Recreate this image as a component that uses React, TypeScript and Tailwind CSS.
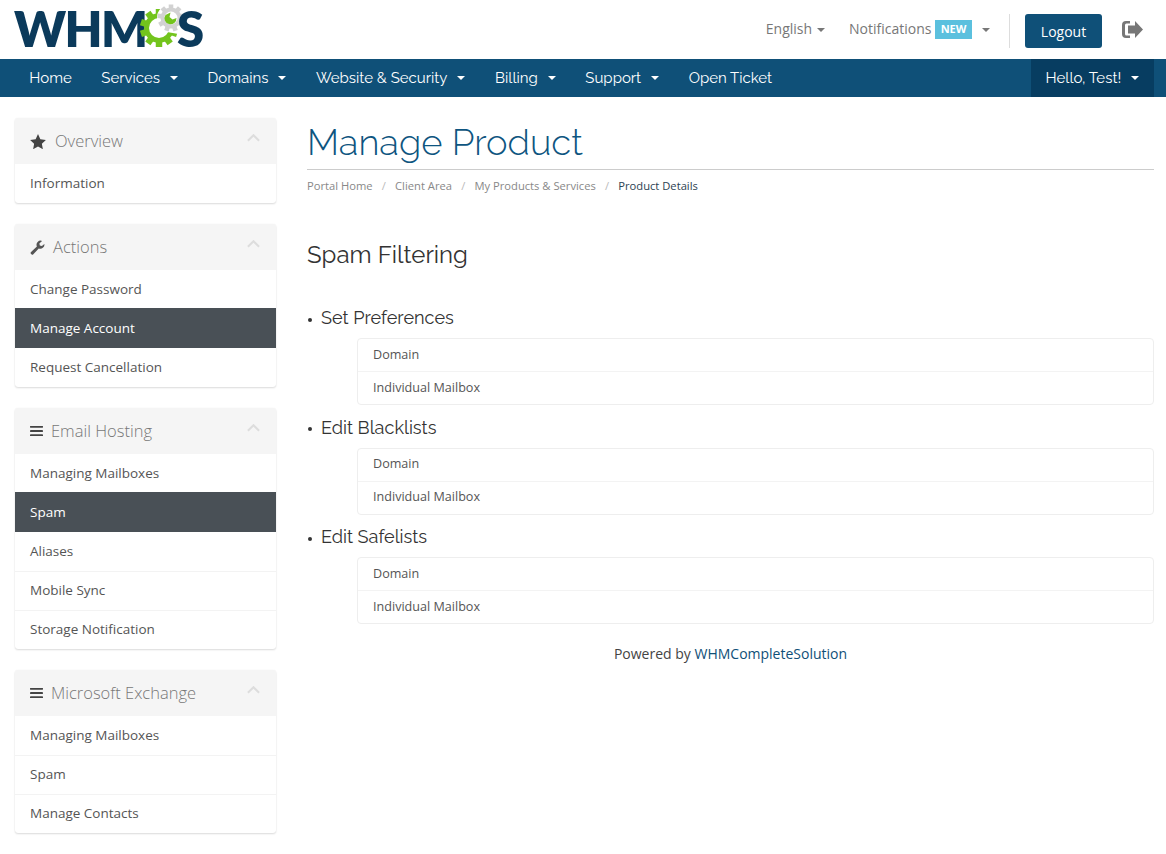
import React from "react";

const OS = "font-['Open_Sans',sans-serif]";

function Caret({ className = "" }: { className?: string }) {
  return <span className={`inline-block w-0 h-0 border-x-[4px] border-x-transparent border-t-[4px] border-t-current ${className}`} />;
}

function Gear({ cx, cy, r, teeth, fill, hole }: { cx: number; cy: number; r: number; teeth: number; fill: string; hole: number }) {
  const items = [];
  for (let i = 0; i < teeth; i++) {
    const a = (360 / teeth) * i;
    items.push(<rect key={i} x={cx - r * 0.17} y={cy - r} width={r * 0.34} height={r * 0.4} fill={fill} transform={`rotate(${a} ${cx} ${cy})`} />);
  }
  return (
    <g>
      {items}
      <circle cx={cx} cy={cy} r={r * 0.78} fill={fill} />
      <circle cx={cx} cy={cy} r={hole} fill="#fff" />
    </g>
  );
}

function Logo() {
  return (
    <div className="relative w-[190px] h-[50px] mt-[3px] font-['Lato',sans-serif] font-extrabold text-[#0b3a5b] text-[49px] leading-[50px]">
      <span className="absolute left-[-1px] top-0 tracking-[-1.6px]">WHM</span>
      {/* gear coordinates: svg origin = page (130,0) */}
      <svg viewBox="0 0 60 54" className="absolute left-[115px] top-[-3px] w-[60px] h-[54px]">
        <Gear cx={29} cy={28} r={19} teeth={10} fill="#73c41d" hole={10} />
        <path d="M31 18 L60 14 L60 36 L37 32 Z" fill="#fff" />
        <circle cx={41} cy={18} r={14} fill="#fff" />
        <Gear cx={41} cy={18} r={13.5} teeth={9} fill="#d2d2d2" hole={6.5} />
        <path d="M35.500 15a6 6 0 1 0 11 3l-4 1.500-3-2.500 1-4.500z" fill="#73c41d" />
      </svg>
      <span className="absolute left-[162px] top-0">S</span>
    </div>
  );
}

function NavItem({ label, caret = true }: { label: string; caret?: boolean }) {
  return (
    <span className="flex items-center h-[38px] px-[14.8px] text-[15px] text-white font-['Raleway','Lato',sans-serif] whitespace-nowrap">
      {label}
      {caret && <Caret className="ml-[10px]" />}
    </span>
  );
}

function IconStar() {
  return (
    <svg viewBox="2 2 20 19" className="w-[16px] h-[15px] mr-[9px] fill-[#444]">
      <path d="M12 2l3 6.600 7 .9-5.100 4.800 1.300 7L12 17.800l-6.200 3.500 1.300-7L2 9.500l7-.9z" />
    </svg>
  );
}
function IconWrench() {
  return (
    <svg viewBox="0 0 24 24" className="w-[15px] h-[15px] mr-[8px] fill-[#555]">
      <path d="M23 6.200a6.600 6.600 0 0 1-9 7.200L5.300 22.600a2.400 2.400 0 0 1-3.500-.1 2.400 2.400 0 0 1-.1-3.400L11 10.400A6.700 6.700 0 0 1 19.300 1.400L15 5.600l.7 3.300 3.300.8z" />
    </svg>
  );
}
function IconBars() {
  return (
    <svg viewBox="0 0 14 12" className="w-[13px] h-[12px] mr-[8px] fill-[#444]">
      <rect x="0" y="0.5" width="14" height="2" rx="0.5" />
      <rect x="0" y="5" width="14" height="2" rx="0.5" />
      <rect x="0" y="9.500" width="14" height="2" rx="0.5" />
    </svg>
  );
}

function Panel({ icon, title, items, active }: { icon: React.ReactNode; title: string; items: string[]; active?: string }) {
  return (
    <div className="mb-[21px] bg-white rounded-[3px] shadow-[0_1px_2px_rgba(0,0,0,0.14),0_0_1px_rgba(0,0,0,0.08)] overflow-hidden">
      <div className="h-[46px] bg-[#f5f5f5] flex items-center px-[15px]">
        {icon}
        <span className="text-[16.500px] text-[#777] font-light">{title}</span>
        <svg viewBox="0 0 14 8" className="ml-auto mb-[6px] mr-[1px] w-[13px] h-[8px] fill-none stroke-[#ddd] stroke-[2.2]">
          <path d="M1 7l6-6 6 6" />
        </svg>
      </div>
      {items.map((it, i) =>
        it === active ? (
          <div key={it} className="relative h-[40px] -mt-px bg-[#495056] text-white flex items-center px-[15px] text-[13.500px] font-medium">{it}</div>
        ) : i > 0 && items[i - 1] !== active ? (
          <div key={it} className="h-[39px] flex items-center px-[15px] pb-[2px] text-[13.500px] text-[#555] border-t border-[#f3f3f3]">{it}</div>
        ) : (
          <div key={it} className="h-[39px] flex items-center px-[15px] text-[13.500px] text-[#555]">{it}</div>
        )
      )}
    </div>
  );
}

function Section({ title }: { title: string }) {
  return (
    <div className="mb-[10.500px]">
      <div className="flex items-center h-[24px] mb-[8px]">
        <span className="w-[4px] h-[4px] rounded-full bg-[#333] ml-[1px] mr-[9px] mt-[3px]" />
        <span className="text-[18.100px] text-[#333] font-['Raleway','Lato',sans-serif]">{title}</span>
      </div>
      <div className="ml-[50px] border border-[#eee] rounded-[4px] text-[12.600px] text-[#555]">
        <div className="h-[32px] flex items-center px-[15px]">Domain</div>
        <div className="h-[33px] flex items-center px-[15px] border-t border-[#f3f3f3]">Individual Mailbox</div>
      </div>
    </div>
  );
}

export default function App() {
  return (
    <div className={`min-h-[854px] bg-white ${OS}`}>
      <header className="h-[59px] flex items-start justify-between px-[15px]">
        <Logo />
        <div className="flex items-center h-[59px] pr-[8px] text-[14px] text-[#777]">
          <span className="flex items-center mt-[-2px]">English<Caret className="ml-[5px] mt-[2px]" /></span>
          <span className="flex items-center ml-[24px] mt-[-2px]">
            Notifications
            <span className="ml-[3.500px] mt-[2px] h-[19px] w-[37px] bg-[#5bc0de] text-white text-[11px] font-bold flex items-center justify-center">NEW</span>
            <Caret className="ml-[10px] mt-[2px]" />
          </span>
          <span className="w-px h-[34px] bg-[#ddd] ml-[19px] mr-[15px] mt-[3px]" />
          <span className="h-[34px] w-[77px] rounded-[3px] bg-[#0f5078] text-white flex items-center justify-center mt-[3px]">Logout</span>
          <svg viewBox="0 0 21 17" className="ml-[20px] w-[21px] h-[17px] fill-[#777]">
            <path d="M8 0H4a4 4 0 0 0-4 4v9a4 4 0 0 0 4 4h4v-2.500H4.500A1.500 1.500 0 0 1 3 13V4a1.500 1.500 0 0 1 1.500-1.500H8z" />
            <path d="M13 0l8 8.500-8 8.500v-4.500H6v-8h7z" />
          </svg>
        </div>
      </header>
      <nav className="h-[38px] bg-[#0f5078] flex justify-between pl-[14.500px] pr-[12px]">
        <div className="flex">
          <NavItem label="Home" caret={false} />
          <NavItem label="Services" />
          <NavItem label="Domains" />
          <NavItem label="Website & Security" />
          <NavItem label="Billing" />
          <NavItem label="Support" />
          <NavItem label="Open Ticket" caret={false} />
        </div>
        <div className="bg-[#073d61]"><NavItem label="Hello, Test!" /></div>
      </nav>
      <div className="flex pl-[15px] pr-[12px] pt-[20px]">
        <aside className="w-[261px] shrink-0 mt-[1px]">
          <Panel icon={<IconStar />} title="Overview" items={["Information"]} />
          <Panel icon={<IconWrench />} title="Actions" items={["Change Password", "Manage Account", "Request Cancellation"]} active="Manage Account" />
          <Panel icon={<IconBars />} title="Email Hosting" items={["Managing Mailboxes", "Spam", "Aliases", "Mobile Sync", "Storage Notification"]} active="Spam" />
          <Panel icon={<IconBars />} title="Microsoft Exchange" items={["Managing Mailboxes", "Spam", "Manage Contacts"]} />
        </aside>
        <main className="flex-1 ml-[31px]">
          <h1 className="text-[36.400px] leading-[44px] mt-[4px] pb-[4px] text-[#0e5580] font-light font-['Raleway','Lato',sans-serif] border-b border-[#ccc]">Manage Product</h1>
          <div className="flex items-center h-[16px] mt-[8px] text-[11.200px] text-[#888]">
            <span>Portal Home</span><span className="mx-[9.200px] text-[#bbb]">/</span>
            <span>Client Area</span><span className="mx-[9.200px] text-[#bbb]">/</span>
            <span>My Products &amp; Services</span><span className="mx-[9.200px] text-[#bbb]">/</span>
            <span className="text-[#2c4252]">Product Details</span>
          </div>
          <h2 className="mt-[45px] mb-[35px] text-[24px] leading-[32px] text-[#333] font-['Raleway','Lato',sans-serif]">Spam Filtering</h2>
          <Section title="Set Preferences" />
          <Section title="Edit Blacklists" />
          <Section title="Edit Safelists" />
          <p className="text-center text-[14px] text-[#444] mt-[19px]">Powered by <span className="text-[#0f5078]">WHMCompleteSolution</span></p>
        </main>
      </div>
    </div>
  );
}
